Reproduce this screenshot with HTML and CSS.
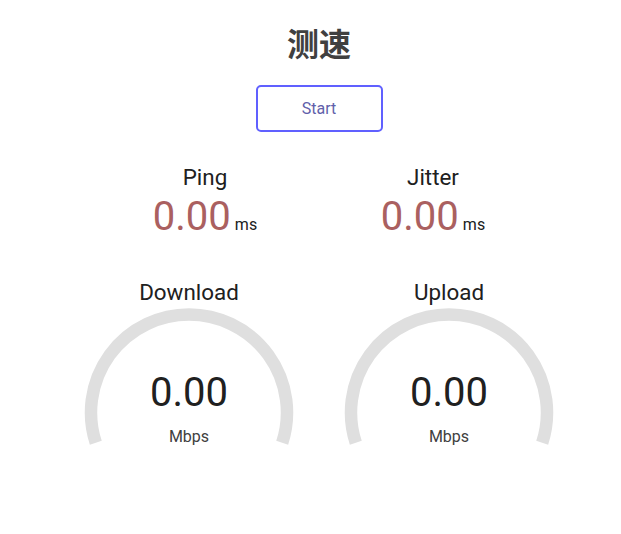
FILE: index.html
```html
<!DOCTYPE html>
<html lang="zh">
<head>
<meta charset="utf-8">
<title>测速</title>
<link rel="stylesheet" href="styles.css">
</head>
<body>
<div class="page">
  <h1 class="title">测速</h1>
  <div class="start-row">
    <div class="start-btn">Start</div>
  </div>
  <div class="metrics">
    <div class="metric">
      <div class="metric-name">Ping</div>
      <div class="metric-value"><span class="metric-num">0.00</span><span class="metric-unit">ms</span></div>
    </div>
    <div class="metric">
      <div class="metric-name">Jitter</div>
      <div class="metric-value"><span class="metric-num">0.00</span><span class="metric-unit">ms</span></div>
    </div>
  </div>
  <div class="gauges">
    <div class="gauge">
      <svg class="gauge-arc" width="260" height="200" viewBox="0 0 260 200">
        <path d="M36.8 163.8 A98 98 0 1 1 223.2 163.8" fill="none" stroke="#DFDFDF" stroke-width="12.5"/>
      </svg>
      <div class="gauge-name">Download</div>
      <div class="gauge-num">0.00</div>
      <div class="gauge-unit">Mbps</div>
    </div>
    <div class="gauge">
      <svg class="gauge-arc" width="260" height="200" viewBox="0 0 260 200">
        <path d="M36.8 163.8 A98 98 0 1 1 223.2 163.8" fill="none" stroke="#DFDFDF" stroke-width="12.5"/>
      </svg>
      <div class="gauge-name">Upload</div>
      <div class="gauge-num">0.00</div>
      <div class="gauge-unit">Mbps</div>
    </div>
  </div>
</div>
</body>
</html>
```
FILE: styles.css
```css
html, body {
  margin: 0;
  padding: 0;
  background: #FFFFFF;
  overflow: hidden;
}
body {
  color: #202020;
  font-family: Roboto, "Noto Sans CJK SC", sans-serif;
}
.page {
  width: 638px;
  text-align: center;
}
.title {
  margin: 22px 0 0;
  font-family: "Noto Sans CJK SC", sans-serif;
  font-size: 32px;
  font-weight: bold;
  line-height: 40px;
  color: #404040;
}
.start-row {
  display: flex;
  justify-content: center;
  margin-top: 23px;
}
.start-btn {
  box-sizing: border-box;
  width: 127px;
  height: 47px;
  border: 2px solid #6060FF;
  border-radius: 5px;
  font-size: 16px;
  line-height: 43px;
  color: #6060AA;
}
.metrics {
  display: flex;
  justify-content: center;
  margin-top: 32px;
}
.metric {
  width: 228px;
  display: flex;
  flex-direction: column;
  align-items: center;
}
.metric-name {
  font-size: 22.4px;
  line-height: 26px;
}
.metric-value {
  display: flex;
  align-items: baseline;
  gap: 4px;
  margin-top: 7px;
}
.metric-num {
  font-size: 40px;
  line-height: 40px;
  color: #AA6060;
}
.metric-unit {
  font-size: 16px;
  line-height: 19px;
}
.gauges {
  display: flex;
  justify-content: center;
  margin-top: 42px;
}
.gauge {
  position: relative;
  width: 260px;
  height: 200px;
  display: flex;
  flex-direction: column;
  align-items: center;
}
.gauge-arc {
  position: absolute;
  top: 0;
  left: 0;
  z-index: 0;
}
.gauge-name,
.gauge-num,
.gauge-unit {
  position: relative;
  z-index: 1;
}
.gauge-name {
  font-size: 22.4px;
  line-height: 26px;
}
.gauge-num {
  margin-top: 68px;
  font-size: 40px;
  line-height: 40px;
}
.gauge-unit {
  margin-top: 14px;
  font-size: 16px;
  line-height: 20px;
  color: #404040;
}
```
